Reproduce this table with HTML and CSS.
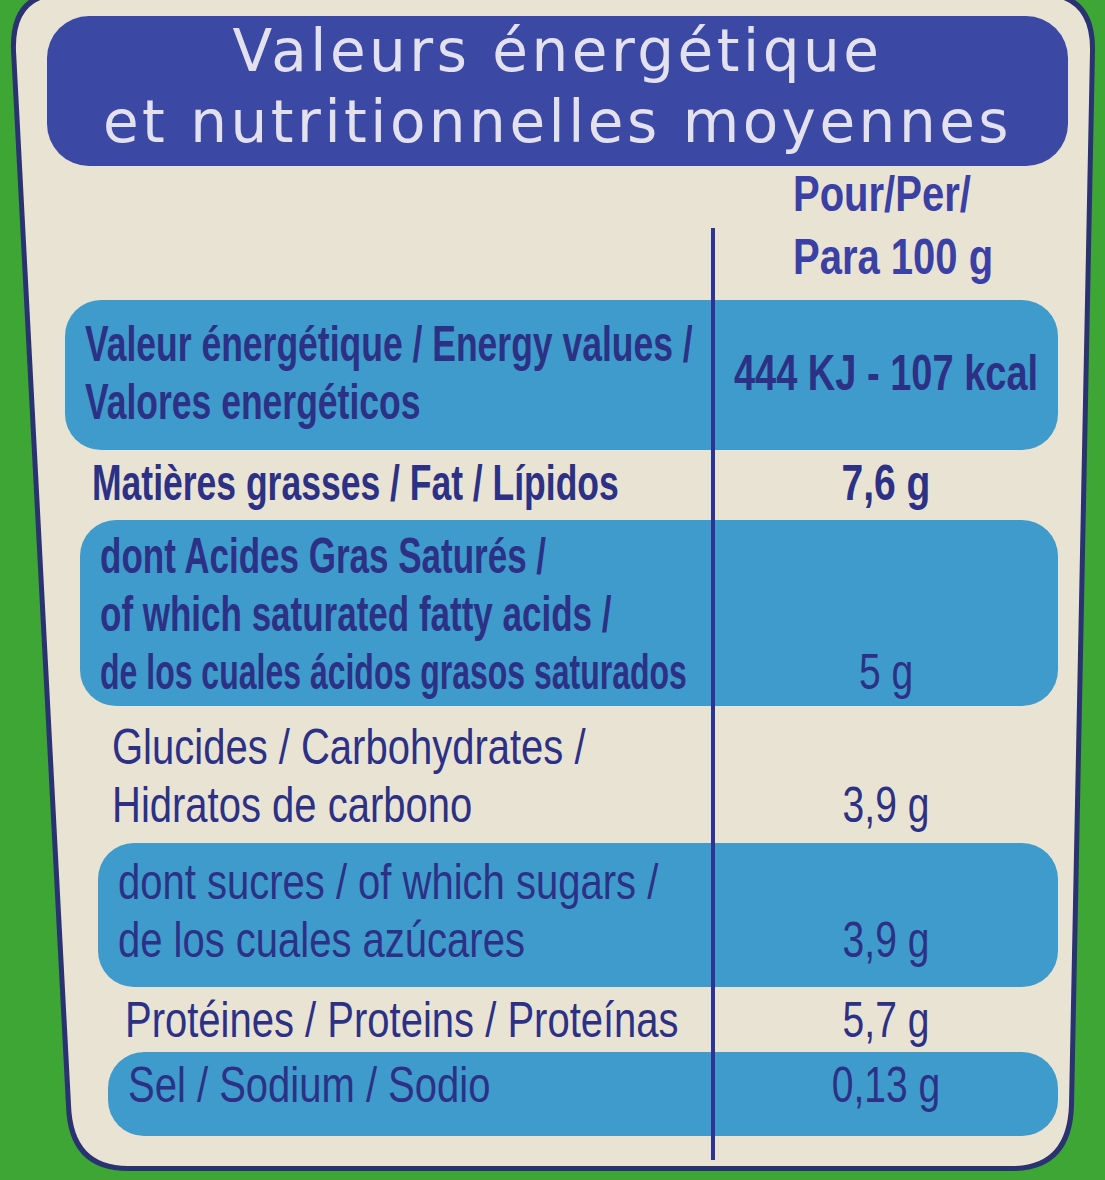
FILE: index.html
```html
<!DOCTYPE html>
<html lang="fr">
<head>
<meta charset="utf-8">
<title>Valeurs énergétique et nutritionnelles moyennes</title>
<link rel="stylesheet" href="styles.css">
</head>
<body>
<div class="pack">
  <div class="sheet">
    <h1 class="title"><span>Valeurs énergétique</span><span>et nutritionnelles moyennes</span></h1>
    <div class="table">
      <div class="per"><span>Pour/Per/</span><span>Para 100 g</span></div>
      <div class="row band r1 strong">
        <div class="lbl"><span>Valeur énergétique / Energy values /</span><span>Valores energéticos</span></div>
        <div class="val mid">444 KJ - 107 kcal</div>
      </div>
      <div class="row r2 strong">
        <div class="lbl"><span>Matières grasses / Fat / Lípidos</span></div>
        <div class="val">7,6 g</div>
      </div>
      <div class="row band r3 strong">
        <div class="lbl"><span>dont Acides Gras Saturés /</span><span>of which saturated fatty acids /</span><span class="narrow">de los cuales ácidos grasos saturados</span></div>
        <div class="val plain">5 g</div>
      </div>
      <div class="row r4">
        <div class="lbl"><span>Glucides / Carbohydrates /</span><span>Hidratos de carbono</span></div>
        <div class="val">3,9 g</div>
      </div>
      <div class="row band r5">
        <div class="lbl"><span>dont sucres / of which sugars /</span><span>de los cuales azúcares</span></div>
        <div class="val">3,9 g</div>
      </div>
      <div class="row r6">
        <div class="lbl"><span>Protéines / Proteins / Proteínas</span></div>
        <div class="val">5,7 g</div>
      </div>
      <div class="row band r7">
        <div class="lbl"><span>Sel / Sodium / Sodio</span></div>
        <div class="val">0,13 g</div>
      </div>
    </div>
  </div>
</div>
</body>
</html>
```
FILE: styles.css
```css
html, body {
  margin: 0;
  background: #3ea634;
}
body {
  width: 1105px;
  height: 1180px;
  overflow: hidden;
}
.pack {
  width: 1105px;
  height: 1180px;
  background: #2b3272;
  clip-path: path('M62 -9 L1040 -9 Q1096 -9 1095 50 L1074 1106 Q1072 1171 1012 1171 L128 1171 Q68 1171 66 1106 L11 50 Q9 -9 62 -9 Z');
}
.sheet {
  width: 1105px;
  height: 1180px;
  background: #e9e3d3;
  display: flow-root;
  clip-path: path('M63 -4 L1040 -4 Q1091 -4 1090 51 L1069 1105 Q1067 1166 1012 1166 L128 1166 Q73 1166 71 1105 L16 51 Q14 -4 63 -4 Z');
}
.title {
  margin: 16px 37px 0 47px;
  height: 150px;
  border-radius: 42px;
  background: #3b49a5;
  color: #e3e1ee;
  font: 400 58px/71px "DejaVu Sans", sans-serif;
  letter-spacing: 3.5px;
  text-align: center;
}
.title span {
  display: block;
}
.table {
  position: relative;
  margin-top: -3px;
  font-family: "Liberation Sans", Arial, sans-serif;
  color: #2c3185;
}
.table::before {
  content: "";
  position: absolute;
  left: 711px;
  top: 65px;
  width: 4px;
  height: 932px;
  background: #2e3492;
}
.per {
  margin-left: 793px;
  font: 700 50px/63px "Liberation Sans", sans-serif;
  color: #3a40a4;
}
.per span {
  display: block;
  white-space: nowrap;
  transform: scaleX(.8);
  transform-origin: 0 50%;
}
.row {
  display: grid;
  grid-template-columns: minmax(0, 1fr) 344px;
  margin-right: 47px;
  padding-left: 20px;
  font-size: 50px;
  line-height: 58px;
}
.band {
  background: #3f9bcc;
  border-radius: 36px;
}
.strong {
  font-weight: 700;
}
.r1 { margin-top: 11px; margin-left: 65px; padding-top: 15px; padding-bottom: 19px; }
.r2 { margin-left: 72px; padding-top: 4px; padding-bottom: 8px; }
.r3 { margin-left: 80px; padding-top: 7px; padding-bottom: 5px; }
.r4 { margin-left: 92px; padding-top: 12px; padding-bottom: 9px; }
.r5 { margin-left: 98px; padding-top: 10px; padding-bottom: 18px; }
.r6 { margin-left: 105px; padding-top: 4px; padding-bottom: 3px; }
.r7 { margin-left: 108px; padding-top: 4px; padding-bottom: 22px; }
.lbl span {
  display: block;
  white-space: nowrap;
  transform: scaleX(.8);
  transform-origin: 0 50%;
}
.strong .lbl span {
  transform: scaleX(.71);
}
.r3 .lbl span {
  transform: scaleX(.7);
}
.r3 .lbl .narrow {
  transform: scaleX(.64);
}
.val {
  display: flex;
  justify-content: center;
  align-self: end;
  white-space: nowrap;
  transform: scaleX(.78);
}
.val.plain {
  font-weight: 400;
}
.val.mid {
  align-self: center;
  transform: scaleX(.76);
}
```
